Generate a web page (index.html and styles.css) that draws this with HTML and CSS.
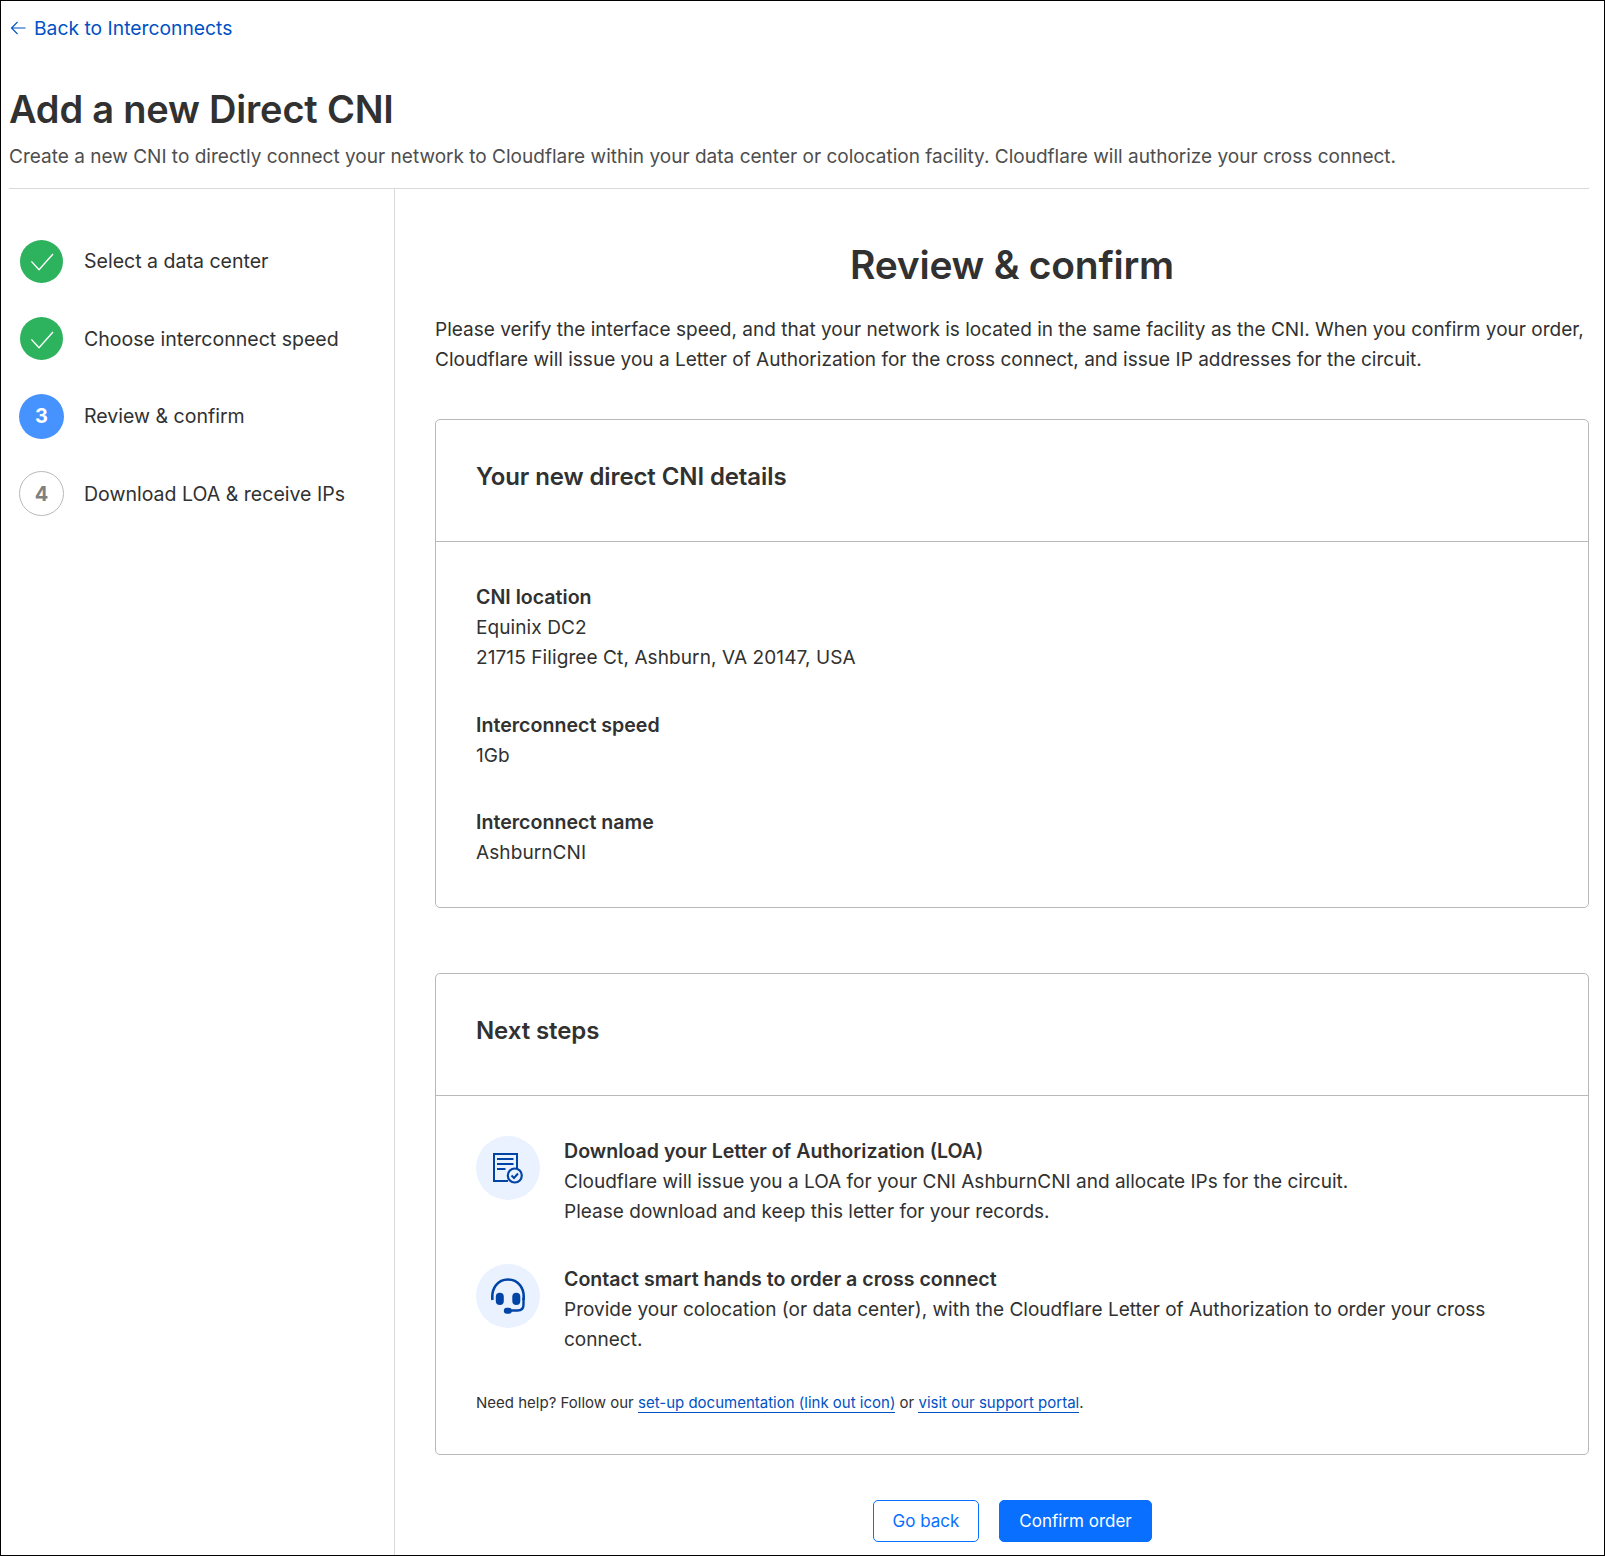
FILE: index.html
```html
<!DOCTYPE html>
<html lang="en">
<head>
<meta charset="utf-8">
<title>Add a new Direct CNI</title>
<link rel="stylesheet" href="styles.css">
</head>
<body>
<div class="frame">
  <a class="back" href="#"><svg class="back-icon" viewBox="0 0 16 16" width="16" height="16"><path d="M15.500 8H1M7.500 2 1.500 8l6 6" fill="none" stroke="currentColor" stroke-width="1.100"/></svg>Back to Interconnects</a>
  <h1 class="title">Add a new Direct CNI</h1>
  <p class="subtitle">Create a new CNI to directly connect your network to Cloudflare within your data center or colocation facility. Cloudflare will authorize your cross connect.</p>
  <div class="layout">
    <ol class="steps">
      <li class="step"><span class="dot done"><svg viewBox="0 0 24 24" width="24" height="24"><path d="M1.400 12.400 9 20.700 23 5" fill="none" stroke="#fff" stroke-width="1.400"/></svg></span>Select a data center</li>
      <li class="step"><span class="dot done"><svg viewBox="0 0 24 24" width="24" height="24"><path d="M1.400 12.400 9 20.700 23 5" fill="none" stroke="#fff" stroke-width="1.400"/></svg></span>Choose interconnect speed</li>
      <li class="step"><span class="dot current">3</span>Review &amp; confirm</li>
      <li class="step"><span class="dot pending">4</span>Download LOA &amp; receive IPs</li>
    </ol>
    <main class="content">
      <h2 class="heading">Review &amp; confirm</h2>
      <p class="intro">Please verify the interface speed, and that your network is located in the same facility as the CNI. When you confirm your order, Cloudflare will issue you a Letter of Authorization for the cross connect, and issue IP addresses for the circuit.</p>
      <section class="card first">
        <h3 class="card-title">Your new direct CNI details</h3>
        <div class="card-body details">
          <p><b>CNI location</b><br>Equinix DC2<br>21715 Filigree Ct, Ashburn, VA 20147, USA</p>
          <p><b>Interconnect speed</b><br>1Gb</p>
          <p><b>Interconnect name</b><br>AshburnCNI</p>
        </div>
      </section>
      <section class="card second">
        <h3 class="card-title">Next steps</h3>
        <div class="card-body next">
          <div class="item">
            <span class="badge"><svg viewBox="0 0 32 32" width="32" height="32" fill="none" stroke="#0045a6"><path d="M16 29H2V2h23v14" stroke-width="2"/><path d="M5 7h16.500M5 12h16.500M5 17h8.500" stroke-width="2"/><circle cx="22.800" cy="23.500" r="7" stroke-width="2.200" fill="#e9f2fe"/><path d="m19.500 23.500 2.500 2.500 4-4.500" stroke-width="2"/></svg></span>
            <p><b>Download your Letter of Authorization (LOA)</b><br>Cloudflare will issue you a LOA for your CNI AshburnCNI and allocate IPs for the circuit.<br>Please download and keep this letter for your records.</p>
          </div>
          <div class="item">
            <span class="badge"><svg viewBox="0 0 36 36" width="36" height="36" fill="none" stroke="#0045a6"><path d="M2.500 22C1 10 8 1.500 18 1.500S35 10 33.500 22" stroke-width="2.600"/><path d="M33.500 20v6.500c0 4-2 6-6 6H18" stroke-width="2.400"/><rect x="5.800" y="14.700" width="8" height="12.300" rx="4" fill="#0045a6" stroke="none"/><rect x="22.300" y="14.700" width="8" height="12.300" rx="4" fill="#0045a6" stroke="none"/><rect x="13.800" y="29.700" width="8" height="6" rx="3" fill="#0045a6" stroke="none"/></svg></span>
            <p><b>Contact smart hands to order a cross connect</b><br>Provide your colocation (or data center), with the Cloudflare Letter of Authorization to order your cross connect.</p>
          </div>
          <p class="help">Need help? Follow our <a href="#">set-up documentation (link out icon)</a> or <a href="#">visit our support portal</a>.</p>
        </div>
      </section>
      <div class="actions">
        <button class="btn secondary" type="button">Go back</button>
        <button class="btn primary" type="button">Confirm order</button>
      </div>
    </main>
  </div>
</div>
</body>
</html>
```
FILE: styles.css
```css
* { box-sizing: border-box; }
html, body { margin: 0; padding: 0; }
body { background: #fff; color: #313131; font-family: Inter, "Liberation Sans", sans-serif; font-size: 19.050px; line-height: 30px; }
.frame { width: 1605px; height: 1556px; border: 1px solid #000; padding: 0 15px 0 8px; overflow: hidden; }
p { margin: 0; }
b { font-weight: 600; font-size: 19.600px; }
.back { display: flex; align-items: center; gap: 8px; margin: 12px 0 0 1px; color: #0051c3; text-decoration: none; font-size: 19.300px; }
.back-icon { flex: none; }
.title { margin: 38px 0 0; font-size: 38px; line-height: 56px; font-weight: 600; letter-spacing: -.2px; }
.subtitle { margin-top: 5px; padding-bottom: 16px; border-bottom: 1px solid #d9d9d9; color: #4e4e4e; white-space: nowrap; }
.layout { display: flex; height: 1400px; }
.steps { list-style: none; margin: 0; padding: 49.500px 0 0 10px; width: 386px; flex: none; border-right: 1px solid #d9d9d9; }
.step { display: flex; align-items: center; gap: 20px; height: 45px; margin-bottom: 32.500px; font-size: 19.550px; }
.dot { display: flex; align-items: center; justify-content: center; width: 45px; height: 45px; border-radius: 50%; flex: none; font-weight: 700; font-size: 20px; }
.done { background: #2db35e; width: 43px; height: 43px; margin: 0 1px; }
.current { background: #4693ff; color: #fff; }
.pending { border: 1px solid #b9b9b9; color: #808080; }
.content { flex: 1; padding-left: 40px; }
.heading { margin: 48px 0 0; text-align: center; font-size: 39px; line-height: 56px; font-weight: 600; letter-spacing: -.25px; }
.intro { margin-top: 22px; }
.card { border: 1px solid #b9b9b9; border-radius: 5px; }
.first { margin-top: 44px; height: 489px; }
.second { margin-top: 65px; height: 482px; }
.card-title { margin: 0; height: 122px; padding: 0 40px 8px; display: flex; align-items: center; border-bottom: 1px solid #b9b9b9; font-size: 24px; letter-spacing: -.1px; font-weight: 600; }
.card-body { padding: 40px 40px 0; }
.details { letter-spacing: .08px; }
.details b { letter-spacing: 0; }
.details p + p { margin-top: 37px; }
.details p:last-child { margin-top: 36px; }
.item { display: flex; gap: 24px; margin-bottom: 37px; }
.badge { width: 64px; height: 64px; flex: none; border-radius: 50%; background: #e9f2fe; display: flex; align-items: center; justify-content: center; }
.help { font-size: 15px; line-height: 24px; margin-top: -1px; }
.help a { color: #0051c3; text-decoration: none; border-bottom: 1px solid #0051c3; }
.actions { display: flex; justify-content: center; gap: 20px; margin-top: 45px; padding-left: 1px; }
.btn { height: 42px; border-radius: 5px; font: 400 17px Inter, "Liberation Sans", sans-serif; }
.secondary { width: 106px; background: #fff; border: 1px solid #086fff; color: #086fff; }
.primary { width: 153px; background: #086fff; border: 1px solid #086fff; color: #fff; }
```
